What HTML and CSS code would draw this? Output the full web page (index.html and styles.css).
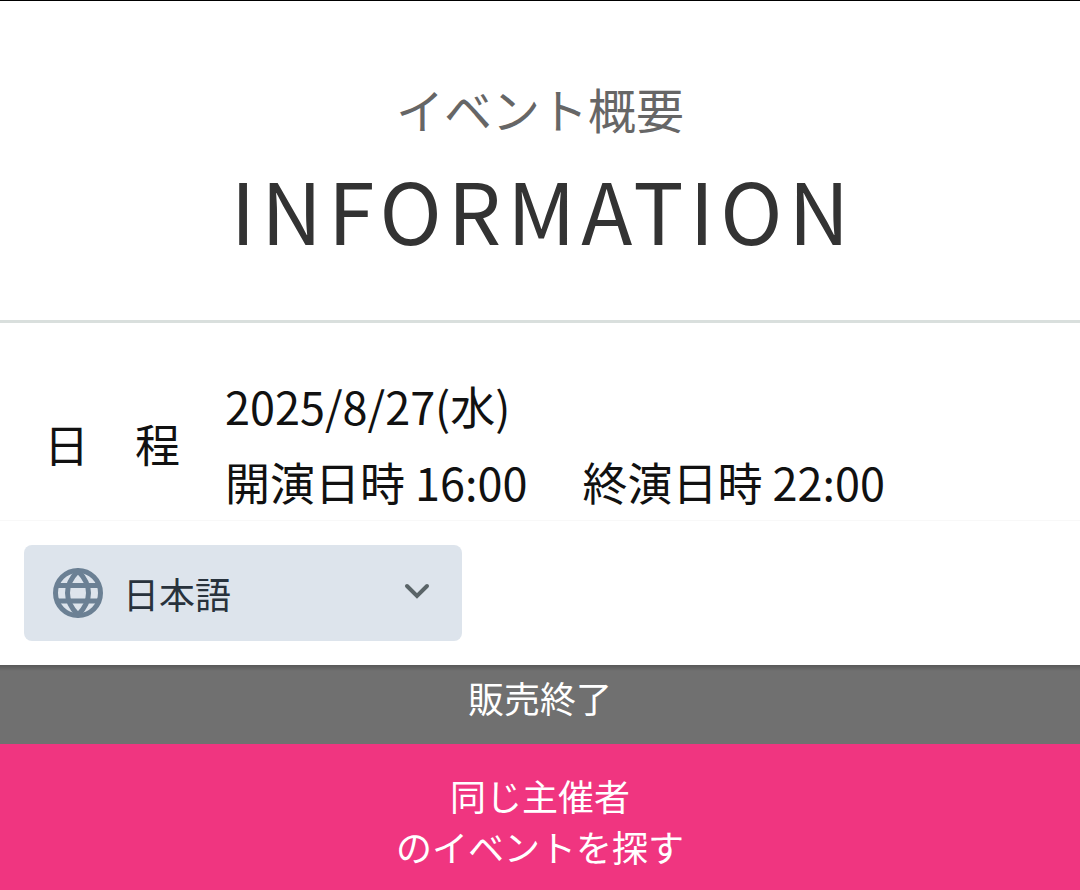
FILE: index.html
```
<!DOCTYPE html>
<html lang="ja">
<head>
    <meta charset="UTF-8">
    <meta name="viewport" content="width=device-width, initial-scale=1.0">
    <title>イベント概要</title>
    <link rel="stylesheet" href="styles.css">
</head>
<body>
    <main class="information">
        <header class="section-header">
            <p class="sub-title">イベント概要</p>
            <h2 class="title">INFORMATION</h2>
        </header>
        <dl class="event-row">
            <dt class="event-label"><span>日</span><span>程</span></dt>
            <dd class="event-detail">
                <p>2025/8/27(水)</p>
                <p class="times"><span>開演日時 16:00</span><span>終演日時 22:00</span></p>
            </dd>
        </dl>
    </main>

    <footer class="bottom-bar">
        <div class="language-bar">
            <div class="language">
                <svg class="globe" viewBox="0 0 50 50" aria-hidden="true">
                    <circle cx="25" cy="25" r="22.5"/>
                    <path d="M25 3C11 17 11 33 25 47C39 33 39 17 25 3z"/>
                    <path d="M5 17.500h40M5 33h40"/>
                </svg>
                <select class="language-select" aria-label="言語">
                    <option>日本語</option>
                    <option>English</option>
                </select>
                <svg class="chevron" viewBox="0 0 26 16" aria-hidden="true">
                    <path d="M3 3l10 10L23 3"/>
                </svg>
            </div>
        </div>
        <p class="sale-status">販売終了</p>
        <a class="search-link" href="#">同じ主催者<br>のイベントを探す</a>
    </footer>
</body>
</html>
```

FILE: styles.css
```
* {
    box-sizing: border-box;
}
body {
    margin: 0;
    border-top: 1px solid #000;
    background-color: #fff;
    color: #111;
    font-family: "Noto Sans CJK JP", sans-serif;
}
p,
h2,
dl,
dd {
    margin: 0;
}
.section-header {
    padding: 71px 24px 46px;
    border-bottom: 3px solid #d9dfdd;
    text-align: center;
}
.sub-title {
    color: #666;
    font-size: 48px;
    line-height: 72px;
}
.title {
    color: #333;
    font-size: 84px;
    font-weight: 400;
    letter-spacing: 6px;
    line-height: 130px;
    text-indent: 6px;
}
.event-row {
    display: flex;
    align-items: center;
    gap: 45px;
    padding: 45px 44px;
    font-size: 45px;
    line-height: 76px;
}
.event-label {
    display: flex;
    justify-content: space-between;
    width: 136px;
}
.times {
    display: flex;
    gap: 55px;
}
.bottom-bar {
    position: fixed;
    right: 0;
    bottom: 0;
    left: 0;
    color: #fff;
    font-size: 36px;
    text-align: center;
}
.language-bar {
    padding: 24px;
    border-top: 1px solid #f8f8f8;
    background-color: #fff;
}
.language {
    display: grid;
    align-items: center;
    width: 438px;
    height: 96px;
    border-radius: 8px;
    background-color: #dde4ec;
}
.language-select,
.globe,
.chevron {
    grid-area: 1 / 1;
}
.language-select {
    order: -1;
    width: 100%;
    height: 96px;
    padding: 0 60px 0 99px;
    border: 0;
    background: none;
    color: #28323c;
    font: inherit;
    appearance: none;
}
.globe,
.chevron {
    fill: none;
    pointer-events: none;
}
.globe {
    width: 50px;
    margin-left: 29px;
    stroke: #6b8094;
    stroke-width: 5;
}
.chevron {
    justify-self: end;
    width: 26px;
    margin: 0 32px 4px 0;
    stroke: #5a6468;
    stroke-width: 4;
    stroke-linecap: round;
}
.sale-status {
    padding: 5px 0 20px;
    background: linear-gradient(#585858, #707070 6px);
    line-height: 54px;
}
.search-link {
    display: block;
    padding: 26px 0 18px;
    background-color: #f03580;
    color: #fff;
    line-height: 51px;
    text-decoration: none;
}
```
